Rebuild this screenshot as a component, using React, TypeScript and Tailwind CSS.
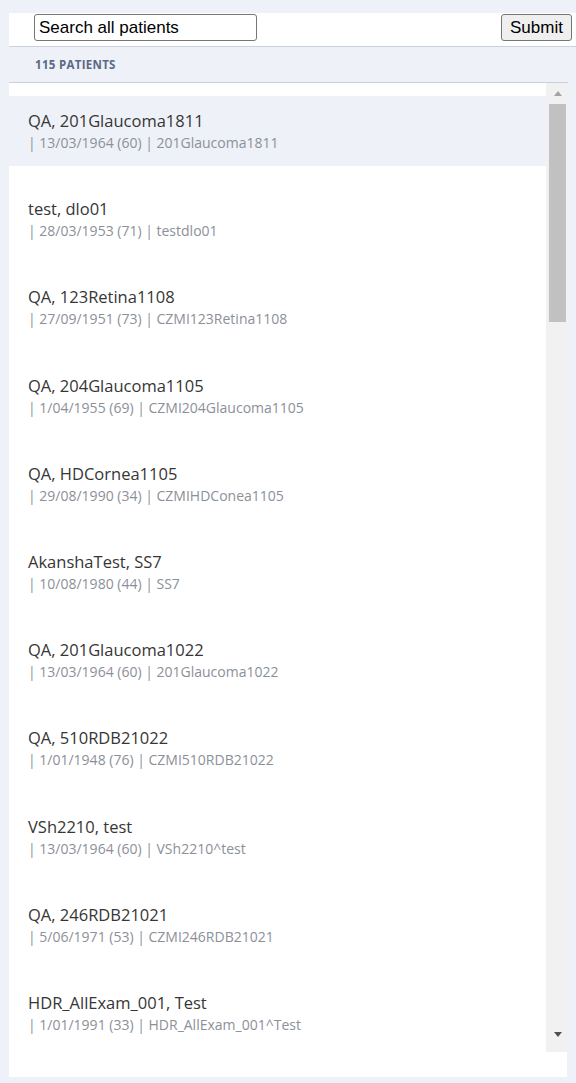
import { useState } from "react";

const patients = [
  { name: "QA, 201Glaucoma1811", dob: "13/03/1964", age: 60, id: "201Glaucoma1811" },
  { name: "test, dlo01", dob: "28/03/1953", age: 71, id: "testdlo01" },
  { name: "QA, 123Retina1108", dob: "27/09/1951", age: 73, id: "CZMI123Retina1108" },
  { name: "QA, 204Glaucoma1105", dob: "1/04/1955", age: 69, id: "CZMI204Glaucoma1105" },
  { name: "QA, HDCornea1105", dob: "29/08/1990", age: 34, id: "CZMIHDConea1105" },
  { name: "AkanshaTest, SS7", dob: "10/08/1980", age: 44, id: "SS7" },
  { name: "QA, 201Glaucoma1022", dob: "13/03/1964", age: 60, id: "201Glaucoma1022" },
  { name: "QA, 510RDB21022", dob: "1/01/1948", age: 76, id: "CZMI510RDB21022" },
  { name: "VSh2210, test", dob: "13/03/1964", age: 60, id: "VSh2210^test" },
  { name: "QA, 246RDB21021", dob: "5/06/1971", age: 53, id: "CZMI246RDB21021" },
  { name: "HDR_AllExam_001, Test", dob: "1/01/1991", age: 33, id: "HDR_AllExam_001^Test" },
];

export default function App() {
  const [query, setQuery] = useState("");
  const [selected, setSelected] = useState(0);

  return (
    <div className="min-h-screen bg-[#eef2f8] pt-[13px] pl-[9px] font-['Open_Sans',sans-serif]">
      {/* search bar */}
      <div className="flex items-start justify-between h-[34px] bg-white border-b border-[#c9d1dd] pl-[25px] pr-[4px] pt-[1px]">
        <input
          value={query}
          onChange={(e) => setQuery(e.target.value)}
          placeholder="Search all patients"
          className="w-[223px] h-[27px] border border-[#767676] rounded-[3px] px-[4px] text-[17px] text-black placeholder:text-black font-['Liberation_Sans',Arial,sans-serif] outline-none"
        />
        <button className="w-[71px] h-[27px] bg-[#efefef] border border-[#767676] rounded-[3px] text-[17px] text-black font-['Liberation_Sans',Arial,sans-serif]">
          Submit
        </button>
      </div>

      <div className="w-[559px] h-[36px] flex items-center pl-[26px] border-b border-[#c9d1dd] text-[11.5px] font-bold text-[#5b6985] tracking-[0.3px]">
        115 PATIENTS
      </div>

      {/* list */}
      <div className="w-[558px] bg-white pb-[25px]">
        <div className="flex h-[969px]">
          <div className="flex-1 overflow-hidden pt-[13px]">
            {patients.map((p, i) => (
              <div
                key={p.id}
                onClick={() => setSelected(i)}
                className={`h-[70px] mb-[18.2px] pl-[19px] pt-[13px] cursor-pointer ${selected === i ? "bg-[#eef2f8]" : "bg-white"}`}
              >
                <div className="text-[16.5px] leading-[23px] text-[#363636]">{p.name}</div>
                <div className="text-[14px] leading-[22px] text-[#8c9099]">
                  | {p.dob} ({p.age}) | {p.id}
                </div>
              </div>
            ))}
          </div>

          {/* scrollbar */}
          <div className="w-[21px] bg-[#f1f1f1] flex flex-col items-start">
            <div className="h-[21px] w-full flex items-center justify-center pl-[2px]">
              <svg width="8" height="5" viewBox="0 0 8 5">
                <path d="M0 5 L4 0 L8 5 Z" fill="#a3a3a3" />
              </svg>
            </div>
            <div className="ml-[3px] w-[17px] h-[218px] bg-[#c1c1c1]" />
            <div className="flex-1" />
            <div className="h-[24px] w-full flex items-start justify-center pl-[2px] pt-[4px]">
              <svg width="8" height="5" viewBox="0 0 8 5">
                <path d="M0 0 L8 0 L4 5 Z" fill="#505050" />
              </svg>
            </div>
          </div>
        </div>
      </div>
    </div>
  );
}
